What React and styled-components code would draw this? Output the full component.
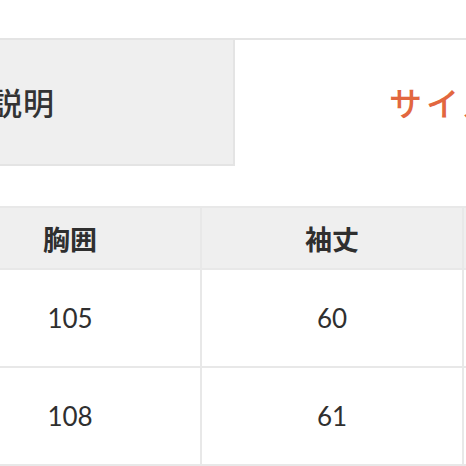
import React from "react";
import styled, { createGlobalStyle } from "styled-components";

const GlobalStyle = createGlobalStyle`
  html, body {
    margin: 0;
    padding: 0;
    background: #fff;
  }
  body {
    width: 466px;
    height: 466px;
    overflow: hidden;
    font-family: Lato, "Noto Sans CJK JP", sans-serif;
    color: #333;
  }
`;

const Page = styled.div`
  padding-top: 38px;
  width: 466px;
  overflow: hidden;
`;

const TabBar = styled.div`
  display: flex;
  margin-left: -253px;
`;

const Tab = styled.div`
  box-sizing: border-box;
  flex: none;
  width: ${(p) => p.width}px;
  height: 128px;
  display: flex;
  align-items: center;
  justify-content: ${(p) => (p.active ? "flex-start" : "center")};
  padding-left: ${(p) => (p.active ? 154 : 0)}px;
  padding-bottom: 2px;
  font-family: "Noto Sans CJK JP", sans-serif;
  font-size: ${(p) => (p.active ? 33 : 31)}px;
  font-weight: 500;
  letter-spacing: ${(p) => (p.active ? 4 : 1)}px;
  white-space: nowrap;
  color: ${(p) => (p.active ? "#e2673f" : "#333")};
  background: ${(p) => (p.active ? "#fff" : "#efefef")};
  border: 2px solid #e4e4e4;
  border-bottom: ${(p) => (p.active ? "none" : "2px solid #e4e4e4")};
  border-left: ${(p) => (p.active ? "none" : "2px solid #e4e4e4")};
`;

const Table = styled.div`
  margin-top: 40px;
  margin-left: -60px;
  display: grid;
  grid-template-columns: repeat(3, 262px);
`;

const Cell = styled.div`
  box-sizing: border-box;
  height: ${(p) => (p.head ? 64 : 98)}px;
  display: flex;
  align-items: center;
  justify-content: center;
  background: ${(p) => (p.head ? "#efefef" : "#fff")};
  border-right: 2px solid #e8e8e8;
  border-bottom: 2px solid #e8e8e8;
  border-top: ${(p) => (p.head ? "2px solid #e8e8e8" : "none")};
  font-family: ${(p) =>
    p.head ? '"Noto Sans CJK JP", sans-serif' : 'Lato, "Noto Sans CJK JP", sans-serif'};
  font-size: ${(p) => (p.head ? 27 : 26)}px;
  font-weight: ${(p) => (p.head ? 700 : 400)};
  color: #2f2f2f;
`;

const heads = ["胸囲", "袖丈", ""];

const rows = [
  ["105", "60", ""],
  ["108", "61", ""],
];

export default function App() {
  return (
    <>
      <GlobalStyle />
      <Page>
        <TabBar>
          <Tab width={488}>商品説明</Tab>
          <Tab width={440} active>
            サイズ表
          </Tab>
        </TabBar>
        <Table>
          {heads.map((h, j) => (
            <Cell head key={`h-${j}`}>
              {h}
            </Cell>
          ))}
          {rows.map((r, i) =>
            r.map((v, j) => <Cell key={`${i}-${j}`}>{v}</Cell>)
          )}
        </Table>
      </Page>
    </>
  );
}
